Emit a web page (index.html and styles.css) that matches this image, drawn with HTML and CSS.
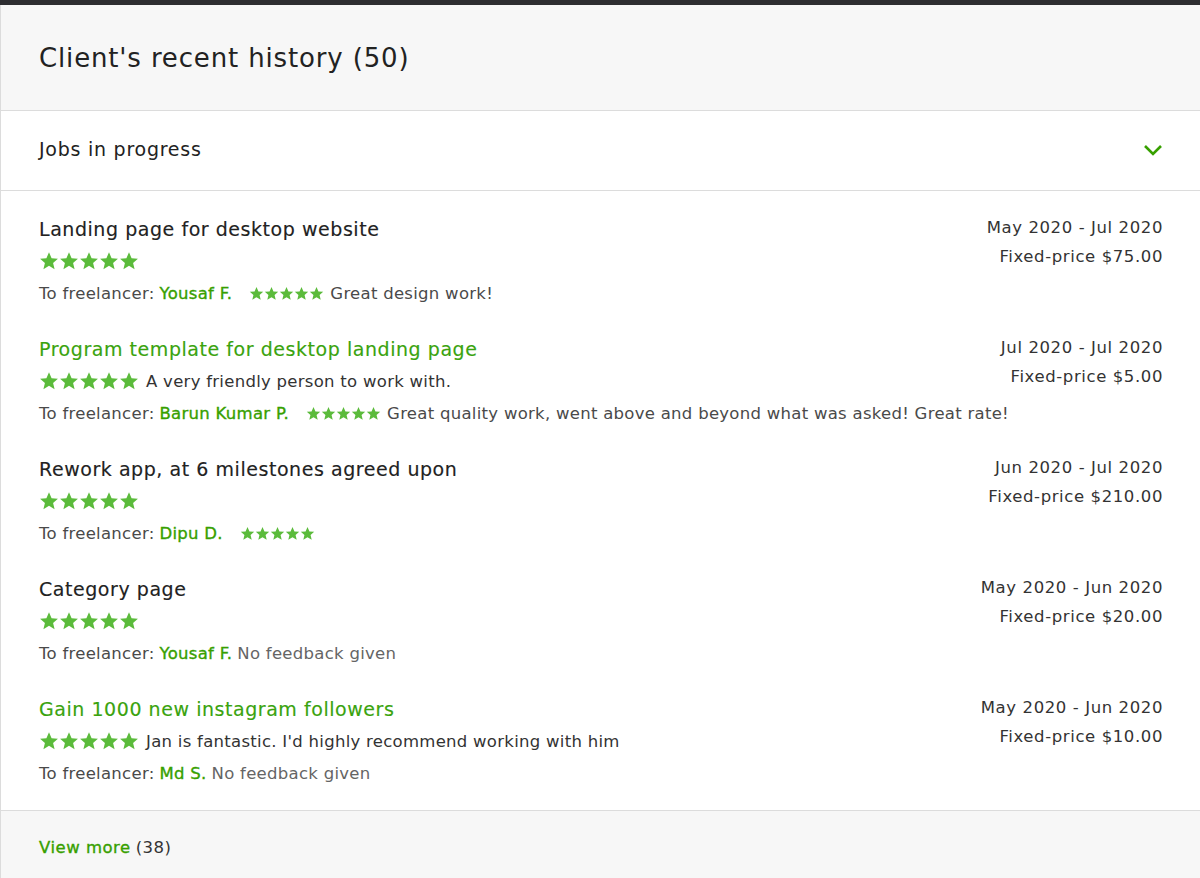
FILE: index.html
```html
<!DOCTYPE html>
<html lang="en">
<head>
    <meta charset="UTF-8">
    <title>Client's recent history</title>
    <link rel="stylesheet" href="styles.css">
</head>
<body>

    <svg class="defs" width="0" height="0">
        <symbol id="star" viewBox="0 0 24 24">
            <path d="M12 1.5l3.1 7.1 7.6.7-5.8 5 1.8 7.5L12 17.8l-6.7 4 1.8-7.5-5.8-5 7.6-.7z"/>
        </symbol>
    </svg>

    <div class="topbar"></div>

    <div class="card">
        <div class="card-header">
            <h2>Client's recent history (50)</h2>
        </div>

        <div class="section-toggle">
            <span>Jobs in progress</span>
            <svg class="chevron" width="20" height="12" viewBox="0 0 20 12">
                <path d="M2 2l8 8 8-8" fill="none" stroke="#37a000" stroke-width="2.6"/>
            </svg>
        </div>

        <div class="history">
            <!-- job 1 -->
            <div class="job">
                <div class="job-main">
                    <div class="job-title">Landing page for desktop website</div>
                    <div class="job-line">
                        <span class="stars big"><svg><use href="#star"/></svg><svg><use href="#star"/></svg><svg><use href="#star"/></svg><svg><use href="#star"/></svg><svg><use href="#star"/></svg></span>
                    </div>
                    <div class="job-line small">
                        To freelancer: <a href="#" class="name">Yousaf F.</a>
                        <span class="stars tiny"><svg><use href="#star"/></svg><svg><use href="#star"/></svg><svg><use href="#star"/></svg><svg><use href="#star"/></svg><svg><use href="#star"/></svg></span>
                        Great design work!
                    </div>
                </div>
                <div class="job-meta">
                    <div>May 2020 - Jul 2020</div>
                    <div>Fixed-price $75.00</div>
                </div>
            </div>

            <!-- job 2 -->
            <div class="job">
                <div class="job-main">
                    <a href="#" class="job-title link">Program template for desktop landing page</a>
                    <div class="job-line">
                        <span class="stars big"><svg><use href="#star"/></svg><svg><use href="#star"/></svg><svg><use href="#star"/></svg><svg><use href="#star"/></svg><svg><use href="#star"/></svg></span>
                        A very friendly person to work with.
                    </div>
                    <div class="job-line small">
                        To freelancer: <a href="#" class="name">Barun Kumar P.</a>
                        <span class="stars tiny"><svg><use href="#star"/></svg><svg><use href="#star"/></svg><svg><use href="#star"/></svg><svg><use href="#star"/></svg><svg><use href="#star"/></svg></span>
                        Great quality work, went above and beyond what was asked! Great rate!
                    </div>
                </div>
                <div class="job-meta">
                    <div>Jul 2020 - Jul 2020</div>
                    <div>Fixed-price $5.00</div>
                </div>
            </div>

            <!-- job 3 -->
            <div class="job">
                <div class="job-main">
                    <div class="job-title">Rework app, at 6 milestones agreed upon</div>
                    <div class="job-line">
                        <span class="stars big"><svg><use href="#star"/></svg><svg><use href="#star"/></svg><svg><use href="#star"/></svg><svg><use href="#star"/></svg><svg><use href="#star"/></svg></span>
                    </div>
                    <div class="job-line small">
                        To freelancer: <a href="#" class="name">Dipu D.</a>
                        <span class="stars tiny"><svg><use href="#star"/></svg><svg><use href="#star"/></svg><svg><use href="#star"/></svg><svg><use href="#star"/></svg><svg><use href="#star"/></svg></span>
                    </div>
                </div>
                <div class="job-meta">
                    <div>Jun 2020 - Jul 2020</div>
                    <div>Fixed-price $210.00</div>
                </div>
            </div>

            <!-- job 4 -->
            <div class="job">
                <div class="job-main">
                    <div class="job-title">Category page</div>
                    <div class="job-line">
                        <span class="stars big"><svg><use href="#star"/></svg><svg><use href="#star"/></svg><svg><use href="#star"/></svg><svg><use href="#star"/></svg><svg><use href="#star"/></svg></span>
                    </div>
                    <div class="job-line small">
                        To freelancer: <a href="#" class="name">Yousaf F.</a> <span class="muted">No feedback given</span>
                    </div>
                </div>
                <div class="job-meta">
                    <div>May 2020 - Jun 2020</div>
                    <div>Fixed-price $20.00</div>
                </div>
            </div>

            <!-- job 5 -->
            <div class="job">
                <div class="job-main">
                    <a href="#" class="job-title link">Gain 1000 new instagram followers</a>
                    <div class="job-line">
                        <span class="stars big"><svg><use href="#star"/></svg><svg><use href="#star"/></svg><svg><use href="#star"/></svg><svg><use href="#star"/></svg><svg><use href="#star"/></svg></span>
                        Jan is fantastic. I'd highly recommend working with him
                    </div>
                    <div class="job-line small">
                        To freelancer: <a href="#" class="name">Md S.</a> <span class="muted">No feedback given</span>
                    </div>
                </div>
                <div class="job-meta">
                    <div>May 2020 - Jun 2020</div>
                    <div>Fixed-price $10.00</div>
                </div>
            </div>
        </div>

        <div class="card-footer">
            <a href="#" class="view-more">View more</a> (38)
        </div>
    </div>

</body>
</html>
```

FILE: styles.css
```css
* {
    margin: 0;
    padding: 0;
    box-sizing: border-box;
}
body {
    font-family: "DejaVu Sans", Arial, sans-serif;
    background-color: #ffffff;
    color: #222222;
}
.defs {
    position: absolute;
}
.topbar {
    height: 5px;
    background: #2e2e31;
}
.card {
    border-left: 1px solid #dcdcdc;
    background: white;
}
.card-header {
    background: #f7f7f7;
    height: 106px;
    padding: 0 38px;
    display: flex;
    align-items: center;
    border-bottom: 1px solid #dcdcdc;
}
.card-header h2 {
    font-weight: 400;
    font-size: 26px;
    letter-spacing: 0.85px;
    color: #222;
    margin-top: 0;
}
.section-toggle {
    height: 80px;
    padding: 0 38px 0 38px;
    display: flex;
    justify-content: space-between;
    align-items: center;
    border-bottom: 1px solid #dcdcdc;
    font-size: 19px;
    letter-spacing: 0.75px;
    color: #222;
}
.section-toggle span {
    margin-top: -4px;
}
.chevron {
    margin-right: -1px;
    margin-top: -1px;
}
.history {
    padding: 14px 37px 5px 38px;
    border-bottom: 1px solid #dcdcdc;
}
.job {
    display: flex;
    justify-content: space-between;
    padding: 8px 0 16px;
}
.job-main {
    min-width: 0;
}
.job-title {
    display: block;
    font-size: 19px;
    letter-spacing: 0.55px;
    line-height: 32px;
    color: #222;
    text-decoration: none;
    -webkit-text-stroke: 0.15px currentColor;
}
.job-title.link {
    color: #3aa30e;
}
.job-line {
    display: flex;
    align-items: center;
    height: 32px;
    font-size: 16.5px;
    letter-spacing: 0.28px;
    color: #333;
    white-space: nowrap;
}
.job-line.small {
    color: #4a4a4a;
}
.name {
    color: #37a000;
    text-decoration: none;
    margin: 0 5px;
    -webkit-text-stroke: 0.35px currentColor;
}
.muted {
    color: #656565;
}
.stars {
    display: inline-flex;
    fill: #5bbb3b;
}
.stars.big svg {
    width: 20px;
    height: 20px;
}
.stars.big {
    margin-right: 7px;
}
.stars.tiny {
    margin: 0 6px 0 12px;
}
.stars.tiny svg {
    width: 15px;
    height: 15px;
}
.job-meta {
    flex-shrink: 0;
    white-space: nowrap;
    text-align: right;
    font-size: 16.5px;
    letter-spacing: 0.6px;
    line-height: 29px;
    color: #333;
}
.card-footer {
    background: #f7f7f7;
    height: 68px;
    padding: 4px 38px 0;
    display: flex;
    align-items: center;
    font-size: 16.5px;
    letter-spacing: 0.5px;
    color: #333;
}
.view-more {
    color: #37a000;
    text-decoration: none;
    margin-right: 5px;
    -webkit-text-stroke: 0.35px currentColor;
}
```
